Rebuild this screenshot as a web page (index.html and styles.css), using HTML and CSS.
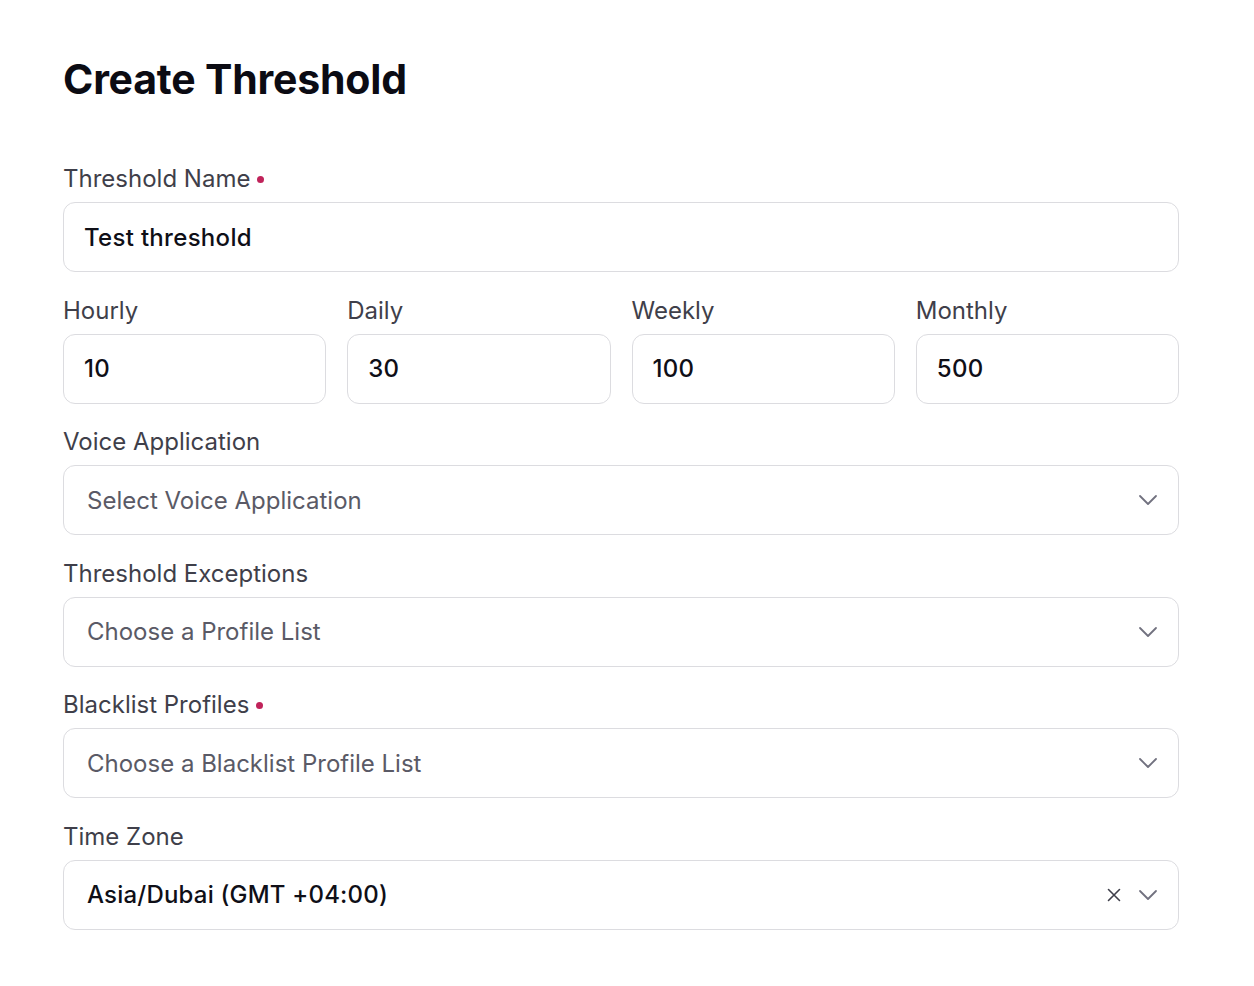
FILE: index.html
```html
<!DOCTYPE html>
<html lang="en">
<head>
<meta charset="utf-8">
<title>Create Threshold</title>
<link rel="stylesheet" href="styles.css">
</head>
<body>
<main class="card">
  <h1 class="title">Create Threshold</h1>
  <form class="form">
    <div class="field">
      <label class="label">Threshold Name <span class="req"></span></label>
      <div class="control"><span class="value">Test threshold</span></div>
    </div>
    <div class="grid4">
      <div class="field">
        <label class="label">Hourly</label>
        <div class="control"><span class="value">10</span></div>
      </div>
      <div class="field">
        <label class="label">Daily</label>
        <div class="control"><span class="value">30</span></div>
      </div>
      <div class="field">
        <label class="label">Weekly</label>
        <div class="control"><span class="value">100</span></div>
      </div>
      <div class="field">
        <label class="label">Monthly</label>
        <div class="control"><span class="value">500</span></div>
      </div>
    </div>
    <div class="field">
      <label class="label">Voice Application</label>
      <div class="control select"><span class="placeholder">Select Voice Application</span>
        <span class="icons"><svg class="chev" viewBox="0 0 20 20" width="20" height="20"><path d="M2 6l8 8 8-8" fill="none" stroke="currentColor" stroke-width="1.8" stroke-linecap="round" stroke-linejoin="round"/></svg></span>
      </div>
    </div>
    <div class="field">
      <label class="label">Threshold Exceptions</label>
      <div class="control select"><span class="placeholder">Choose a Profile List</span>
        <span class="icons"><svg class="chev" viewBox="0 0 20 20" width="20" height="20"><path d="M2 6l8 8 8-8" fill="none" stroke="currentColor" stroke-width="1.8" stroke-linecap="round" stroke-linejoin="round"/></svg></span>
      </div>
    </div>
    <div class="field">
      <label class="label">Blacklist Profiles <span class="req"></span></label>
      <div class="control select"><span class="placeholder">Choose a Blacklist Profile List</span>
        <span class="icons"><svg class="chev" viewBox="0 0 20 20" width="20" height="20"><path d="M2 6l8 8 8-8" fill="none" stroke="currentColor" stroke-width="1.8" stroke-linecap="round" stroke-linejoin="round"/></svg></span>
      </div>
    </div>
    <div class="field">
      <label class="label">Time Zone</label>
      <div class="control select"><span class="selected">Asia/Dubai (GMT +04:00)</span>
        <span class="icons">
          <svg class="clear" viewBox="0 0 16 16" width="16" height="16"><path d="M2.5 2.5l11 11M13.5 2.5l-11 11" fill="none" stroke="currentColor" stroke-width="1.6" stroke-linecap="round"/></svg>
          <svg class="chev" viewBox="0 0 20 20" width="20" height="20"><path d="M2 6l8 8 8-8" fill="none" stroke="currentColor" stroke-width="1.8" stroke-linecap="round" stroke-linejoin="round"/></svg>
        </span>
      </div>
    </div>
  </form>
</main>
</body>
</html>
```
FILE: styles.css
```css
* { box-sizing: border-box; }
html, body { margin: 0; padding: 0; background: #ffffff; }
body {
  font-family: Inter, "Noto Sans", "Liberation Sans", sans-serif;
  color: #0c0c14;
}
.card {
  width: 1254px;
  min-height: 986px;
  padding: 52px 75px 40px 63px;
  background: #fff;
  border-radius: 18px;
}
.title {
  margin: 0 0 57px 0;
  font-size: 41px;
  line-height: 54px;
  font-weight: 700;
  letter-spacing: -0.2px;
  color: #0b0b13;
}
.form {
  display: flex;
  flex-direction: column;
  gap: 22.6px;
}
.grid4 {
  display: grid;
  grid-template-columns: repeat(4, 1fr);
  column-gap: 21px;
}
.field {
  display: flex;
  flex-direction: column;
  gap: 7px;
}
.label {
  display: flex;
  align-items: center;
  gap: 7px;
  font-size: 24px;
  line-height: 32px;
  color: #3f3f4a;
}
.req {
  width: 7px;
  height: 7px;
  border-radius: 50%;
  background: #c0235a;
  margin-top: 1px;
}
.control {
  height: 70px;
  border: 1px solid #dcdce0;
  border-radius: 12px;
  background: #fff;
  display: flex;
  align-items: center;
  padding: 0 20px 0 20px;
}
.value {
  font-size: 24px;
  font-weight: 500;
  letter-spacing: 0.3px;
  color: #0f0f17;
}
.select { padding-left: 23px; justify-content: space-between; }
.placeholder {
  font-size: 24px;
  color: #5a5a66;
}
.selected {
  font-size: 24px;
  font-weight: 500;
  letter-spacing: 0.2px;
  color: #0f0f17;
}
.icons {
  display: flex;
  align-items: center;
  gap: 16px;
}
.chev { color: #71717f; display: block; }
.clear { color: #3f3f4a; display: block; }
```
